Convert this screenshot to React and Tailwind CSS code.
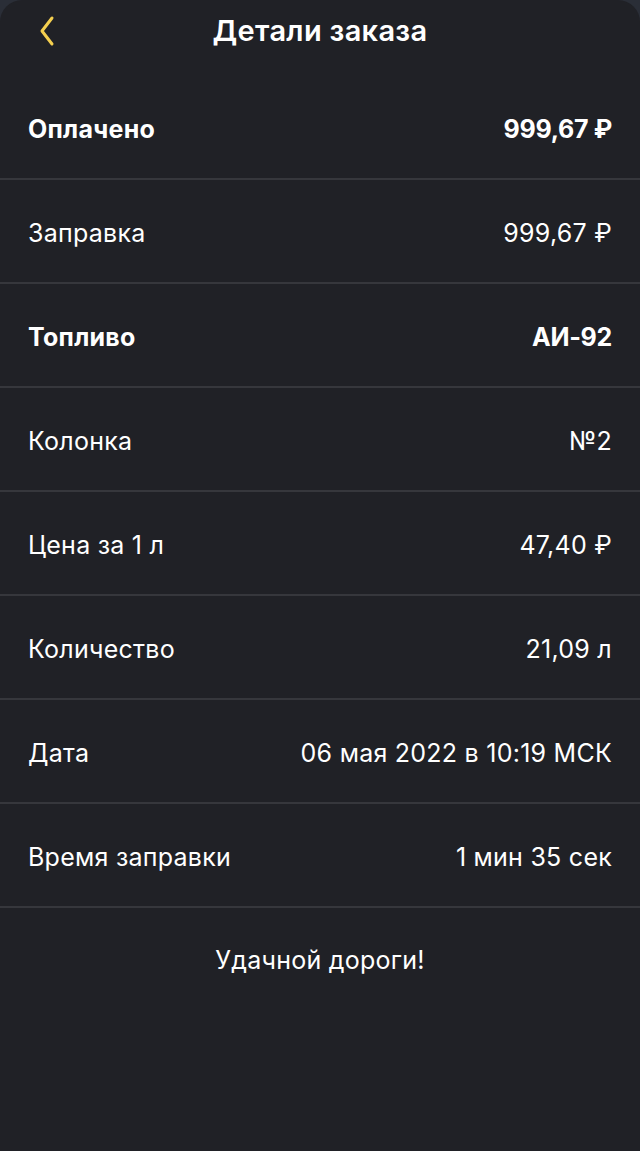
import React from 'react';

const rows = [
  { label: 'Оплачено', value: '999,67 ₽', bold: true },
  { label: 'Заправка', value: '999,67 ₽' },
  { label: 'Топливо', value: 'АИ-92', bold: true },
  { label: 'Колонка', value: '№2' },
  { label: 'Цена за 1 л', value: '47,40 ₽' },
  { label: 'Количество', value: '21,09 л' },
  { label: 'Дата', value: '06 мая 2022 в 10:19 МСК' },
  { label: 'Время заправки', value: '1 мин 35 сек' },
];

export default function App() {
  return (
    <div className="min-h-[1151px] w-[640px] bg-[#2a2e37]" style={{ fontFamily: 'Inter, "Noto Sans", sans-serif' }}>
      <div className="min-h-[1151px] rounded-t-[22px] bg-[#202126] text-white">
        <div className="relative flex h-[76px] items-start justify-center pt-[12px]">
          <button className="absolute left-[36px] top-[15px] text-[#f4cf4f]">
            <svg width="24" height="32" viewBox="0 0 24 32" fill="none">
              <path d="M16 3 L6 16 L16 29" stroke="currentColor" strokeWidth="3" strokeLinecap="round" strokeLinejoin="round" />
            </svg>
          </button>
          <h1 className="text-[29px] font-semibold leading-[38px] tracking-[0.3px]">Детали заказа</h1>
        </div>

        {rows.map((row, i) => (
          <div key={i}>
            <div className="flex h-[102px] items-center justify-between px-[28px] pt-[6px] text-[25px] tracking-[0.25px]">
              <span className={row.bold ? 'font-bold' : 'font-normal'}>{row.label}</span>
              <span className={row.bold ? 'font-bold tracking-[-0.3px]' : 'font-normal'}>{row.value}</span>
            </div>
            <div className="h-[2px] bg-[#36373c]" />
          </div>
        ))}

        <p className="pt-[34px] text-center text-[25px] tracking-[0.25px]">Удачной дороги!</p>
      </div>
    </div>
  );
}
